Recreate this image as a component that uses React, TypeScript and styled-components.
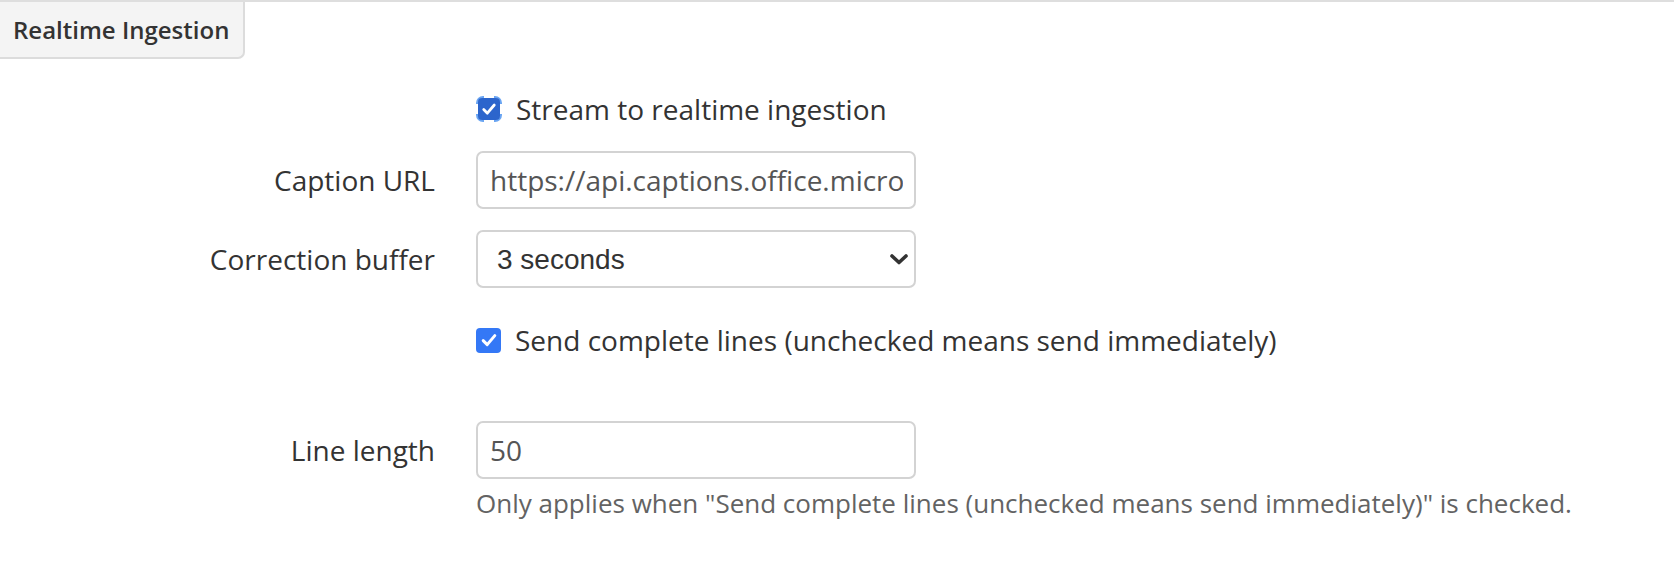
import React from 'react';
import styled, { createGlobalStyle } from 'styled-components';

const GlobalStyle = createGlobalStyle`
  html, body {
    margin: 0;
    padding: 0;
    background: #fff;
  }
  body {
    font-family: 'Open Sans', 'Liberation Sans', sans-serif;
    color: #333;
  }
`;

const Panel = styled.div`
  border-top: 2px solid #dedede;
  min-height: 582px;
  background: #fff;
`;

const Tab = styled.div`
  display: inline-flex;
  align-items: center;
  box-sizing: border-box;
  height: 57px;
  padding: 0 14px 0 13px;
  background: #f4f4f4;
  border-right: 2px solid #dcdcdc;
  border-bottom: 2px solid #dcdcdc;
  border-bottom-right-radius: 7px;
  font-size: 24px;
  font-weight: 600;
  color: #333;
  white-space: nowrap;
`;

const Form = styled.form`
  padding-top: 31px;
`;

const FormGroup = styled.div<{ $mb?: number }>`
  display: grid;
  grid-template-columns: 435px 1fr;
  column-gap: 41px;
  align-items: center;
  margin-bottom: ${(p) => p.$mb ?? 0}px;
`;

const Label = styled.label`
  font-size: 28px;
  color: #333;
  text-align: right;
  white-space: nowrap;
`;

const Control = styled.div`
  display: flex;
  flex-direction: column;
  align-items: flex-start;
`;

const CheckRow = styled.label`
  display: flex;
  align-items: center;
  gap: 14px;
  height: 38px;
  font-size: 28px;
  color: #333;
  white-space: nowrap;
`;

const FocusRing = styled.span`
  position: relative;
  box-sizing: border-box;
  width: 26px;
  height: 26px;
  border: 2px solid #6aa5f2;
  border-radius: 7px;
  display: flex;
  align-items: center;
  justify-content: center;

  &::before,
  &::after {
    content: '';
    position: absolute;
  }
  &::before {
    top: -2px;
    bottom: -2px;
    left: 6px;
    right: 6px;
    border-top: 2px solid #fff;
    border-bottom: 2px solid #fff;
  }
  &::after {
    left: -2px;
    right: -2px;
    top: 6px;
    bottom: 6px;
    border-left: 2px solid #fff;
    border-right: 2px solid #fff;
  }
`;

const Box = styled.span<{ $size: number; $bg: string }>`
  display: flex;
  align-items: center;
  justify-content: center;
  width: ${(p) => p.$size}px;
  height: ${(p) => p.$size}px;
  border-radius: 4px;
  background: ${(p) => p.$bg};
  flex-shrink: 0;
`;

const TextInput = styled.input`
  box-sizing: border-box;
  width: 440px;
  height: 58px;
  padding: 0 11px 0 12px;
  border: 2px solid #d3d3d3;
  border-radius: 7px;
  font-family: 'Open Sans', sans-serif;
  font-size: 28px;
  color: #555;
  background: #fff;
  outline: none;
`;

const SelectWrap = styled.div`
  position: relative;
  width: 440px;
`;

const Select = styled.select`
  box-sizing: border-box;
  width: 100%;
  height: 58px;
  padding: 0 40px 0 19px;
  border: 2px solid #d3d3d3;
  border-radius: 7px;
  font-family: 'Liberation Sans', Arial, sans-serif;
  font-size: 28px;
  color: #333;
  background: #fff;
  appearance: none;
  -webkit-appearance: none;
  outline: none;
`;

const Chevron = styled.svg`
  position: absolute;
  right: 7px;
  top: 24px;
  pointer-events: none;
`;

const Help = styled.p`
  margin: 6px 0 0;
  font-size: 26px;
  color: #636363;
  white-space: nowrap;
`;

const Check = ({ size }: { size: number }) => (
  <svg width={size} height={size} viewBox="0 0 22 22">
    <path
      d="M5.2 11.6 L9.2 15.6 L16.8 6.6"
      fill="none"
      stroke="#fff"
      strokeWidth="3"
      strokeLinecap="round"
      strokeLinejoin="round"
    />
  </svg>
);

const App: React.FC = () => {
  const lineLabel = 'Send complete lines (unchecked means send immediately)';

  return (
    <>
      <GlobalStyle />
      <Panel>
        <Tab>Realtime Ingestion</Tab>
        <Form onSubmit={(e) => e.preventDefault()}>
          <FormGroup $mb={23}>
            <span />
            <CheckRow>
              <FocusRing>
                <Box $size={22} $bg="#2c65cc">
                  <Check size={20} />
                </Box>
              </FocusRing>
              Stream to realtime ingestion
            </CheckRow>
          </FormGroup>

          <FormGroup $mb={21}>
            <Label>Caption URL</Label>
            <Control>
              <TextInput
                defaultValue="https://api.captions.office.microsoft.com/cartcaption/v1/deliver"
              />
            </Control>
          </FormGroup>

          <FormGroup $mb={33}>
            <Label>Correction buffer</Label>
            <Control>
              <SelectWrap>
                <Select defaultValue="3">
                  <option value="0">No buffer</option>
                  <option value="1">1 second</option>
                  <option value="3">3 seconds</option>
                  <option value="5">5 seconds</option>
                </Select>
                <Chevron width="20" height="11" viewBox="0 0 20 11">
                  <polyline
                    points="3,2 10,8.5 17,2"
                    fill="none"
                    stroke="#333"
                    strokeWidth="3.6"
                    strokeLinecap="round"
                    strokeLinejoin="round"
                  />
                </Chevron>
              </SelectWrap>
            </Control>
          </FormGroup>

          <FormGroup $mb={62}>
            <span />
            <CheckRow>
              <Box $size={25} $bg="#3478f6">
                <Check size={22} />
              </Box>
              {lineLabel}
            </CheckRow>
          </FormGroup>

          <FormGroup>
            <Label>Line length</Label>
            <Control>
              <TextInput defaultValue="50" />
            </Control>
          </FormGroup>
          <FormGroup>
            <span />
            <Help>Only applies when "{lineLabel}" is checked.</Help>
          </FormGroup>
        </Form>
      </Panel>
    </>
  );
};

export default App;
